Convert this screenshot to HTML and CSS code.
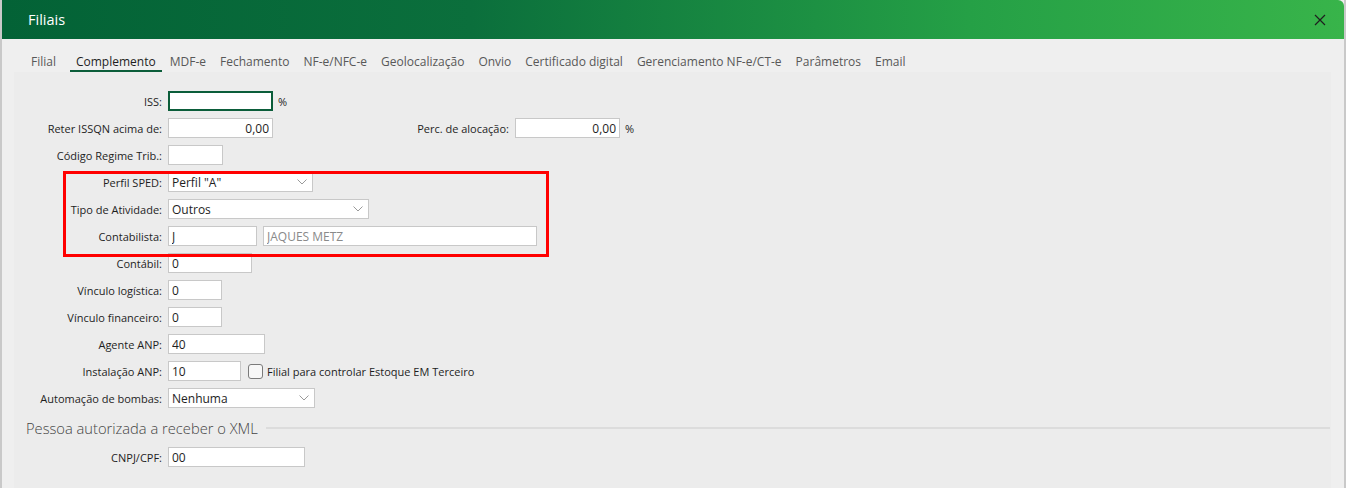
FILE: index.html
```html
<!DOCTYPE html>
<html lang="pt-BR">
<head>
    <meta charset="utf-8">
    <title>Filiais</title>
    <link rel="stylesheet" href="styles.css">
</head>
<body>
    <div class="window">
        <div class="titlebar">
            <h1>Filiais</h1>
            <svg class="close" width="12" height="12" viewBox="0 0 12 12">
                <path d="M1 1 L11 11 M11 1 L1 11" stroke="#1e1e1e" stroke-width="1.2" fill="none"/>
            </svg>
        </div>
        <ul class="tabs">
            <li class="first">Filial</li>
            <li class="active">Complemento</li>
            <li>MDF-e</li>
            <li>Fechamento</li>
            <li>NF-e/NFC-e</li>
            <li>Geolocalização</li>
            <li>Onvio</li>
            <li>Certificado digital</li>
            <li>Gerenciamento NF-e/CT-e</li>
            <li>Parâmetros</li>
            <li>Email</li>
        </ul>
        <div class="panel">
            <div class="form">
                <label>ISS:</label>
                <div class="field">
                    <input class="w105 focus" type="text" value="">
                    <span class="unit">%</span>
                </div>

                <label>Reter ISSQN acima de:</label>
                <div class="field">
                    <input class="w105 num" type="text" value="0,00">
                    <label class="side">Perc. de alocação:</label>
                    <input class="w105 num" type="text" value="0,00">
                    <span class="unit">%</span>
                </div>

                <label>Código Regime Trib.:</label>
                <div class="field"><input class="w55" type="text" value=""></div>

                <label>Perfil SPED:</label>
                <div class="field">
                    <div class="select w145"><span>Perfil "A"</span>
                        <svg width="10" height="6" viewBox="0 0 10 6"><path d="M0.5 0.5 L5 5 L9.5 0.5" stroke="#9a9a9a" fill="none"/></svg>
                    </div>
                </div>

                <label>Tipo de Atividade:</label>
                <div class="field">
                    <div class="select w201"><span>Outros</span>
                        <svg width="10" height="6" viewBox="0 0 10 6"><path d="M0.5 0.5 L5 5 L9.5 0.5" stroke="#9a9a9a" fill="none"/></svg>
                    </div>
                </div>

                <label>Contabilista:</label>
                <div class="field">
                    <input class="w89" type="text" value="J">
                    <input class="w274 muted" type="text" value="JAQUES METZ" readonly>
                </div>

                <label>Contábil:</label>
                <div class="field"><input class="w84" type="text" value="0"></div>

                <label>Vínculo logística:</label>
                <div class="field"><input class="w54" type="text" value="0"></div>

                <label>Vínculo financeiro:</label>
                <div class="field"><input class="w54" type="text" value="0"></div>

                <label>Agente ANP:</label>
                <div class="field"><input class="w97" type="text" value="40"></div>

                <label>Instalação ANP:</label>
                <div class="field">
                    <input class="w73" type="text" value="10">
                    <span class="check"></span>
                    <span class="check-label">Filial para controlar Estoque EM Terceiro</span>
                </div>

                <label>Automação de bombas:</label>
                <div class="field">
                    <div class="select w147"><span>Nenhuma</span>
                        <svg width="10" height="6" viewBox="0 0 10 6"><path d="M0.5 0.5 L5 5 L9.5 0.5" stroke="#9a9a9a" fill="none"/></svg>
                    </div>
                </div>
            </div>

            <div class="section">
                <h2>Pessoa autorizada a receber o XML</h2>
                <div class="rule"></div>
            </div>

            <div class="form">
                <label>CNPJ/CPF:</label>
                <div class="field"><input class="w137" type="text" value="00"></div>
            </div>
        </div>

        <div class="highlight"></div>
    </div>
</body>
</html>
```

FILE: styles.css
```css
body {
    margin: 0;
    background-color: #efefef;
    font-family: "Open Sans", "Noto Sans", Arial, sans-serif;
    color: #1e1e1e;
}
.window {
    position: relative;
    height: 488px;
    border-left: 2px solid #c9c9c9;
    border-right: 2px solid #c9c9c9;
    box-sizing: border-box;
    overflow: hidden;
}
.titlebar {
    height: 39px;
    display: flex;
    align-items: center;
    justify-content: space-between;
    padding: 0 18px 0 26px;
    background: linear-gradient(90deg, #036236 0%, #0b6f3c 35%, #25a046 72%, #38b44a 100%);
    border-top-right-radius: 6px;
}
.titlebar h1 {
    margin: 0;
    font-size: 14.5px;
    font-weight: normal;
    color: #fff;
}
.close {
    display: block;
}
.tabs {
    list-style-type: none;
    margin: 0;
    padding: 0 0 0 23px;
    height: 33px;
    display: flex;
    align-items: flex-end;
    font-size: 12px;
    color: #585858;
}
.tabs li {
    padding: 0 6px;
    margin-right: 2px;
    line-height: 17px;
    border-bottom: 2px solid transparent;
}
.tabs li.first {
    margin-right: 8px;
}
.tabs li.active {
    color: #1e1e1e;
    border-bottom-color: #0b5d3a;
}
.panel {
    margin: 0 13px 0 12px;
    padding-top: 19px;
    background-color: #ececec;
    height: 420px;
}
.form {
    display: grid;
    grid-template-columns: 148px auto;
    column-gap: 6px;
    row-gap: 7px;
    align-items: center;
}
.form label {
    text-align: right;
    font-size: 11px;
    white-space: nowrap;
}
.field {
    display: flex;
    align-items: center;
    height: 20px;
}
input, .select {
    box-sizing: border-box;
    height: 20px;
    margin: 0;
    padding: 0 3px;
    border: 1px solid #c8c8c8;
    background-color: #fff;
    font-family: inherit;
    font-size: 12px;
    color: #1e1e1e;
    outline: none;
}
input.focus {
    border: 2px solid #0b5d3a;
}
input.num {
    text-align: right;
}
input.muted {
    color: #8a8a8a;
    margin-left: 6px;
}
.select {
    display: flex;
    align-items: center;
    justify-content: space-between;
    padding-right: 5px;
}
.unit {
    font-size: 11px;
    margin-left: 5px;
}
.form .side {
    width: 236px;
    margin-right: 6px;
}
.check {
    width: 15px;
    height: 15px;
    margin-left: 7px;
    box-sizing: border-box;
    border: 1px solid #7a7a7a;
    border-radius: 3px;
    background-color: #f7f7f7;
}
.check-label {
    margin-left: 4px;
    font-size: 11px;
}
.w54 { width: 54px; }
.w55 { width: 55px; }
.w73 { width: 73px; }
.w84 { width: 84px; }
.w89 { width: 89px; }
.w97 { width: 97px; }
.w105 { width: 105px; }
.w137 { width: 137px; }
.w145 { width: 145px; }
.w147 { width: 147px; }
.w201 { width: 201px; }
.w274 { width: 274px; }
.section {
    display: flex;
    align-items: center;
    margin: 9px 0 8px 12px;
    height: 22px;
}
.section h2 {
    margin: 0;
    font-size: 14.7px;
    font-weight: 300;
    color: #444;
    white-space: nowrap;
}
.rule {
    flex-grow: 1;
    height: 2px;
    margin-left: 8px;
    margin-right: 1px;
    background-color: #dcdcdc;
}
.highlight {
    position: absolute;
    left: 61px;
    top: 171px;
    width: 486px;
    height: 86px;
    box-sizing: border-box;
    border: 3px solid #ff0000;
}
```
